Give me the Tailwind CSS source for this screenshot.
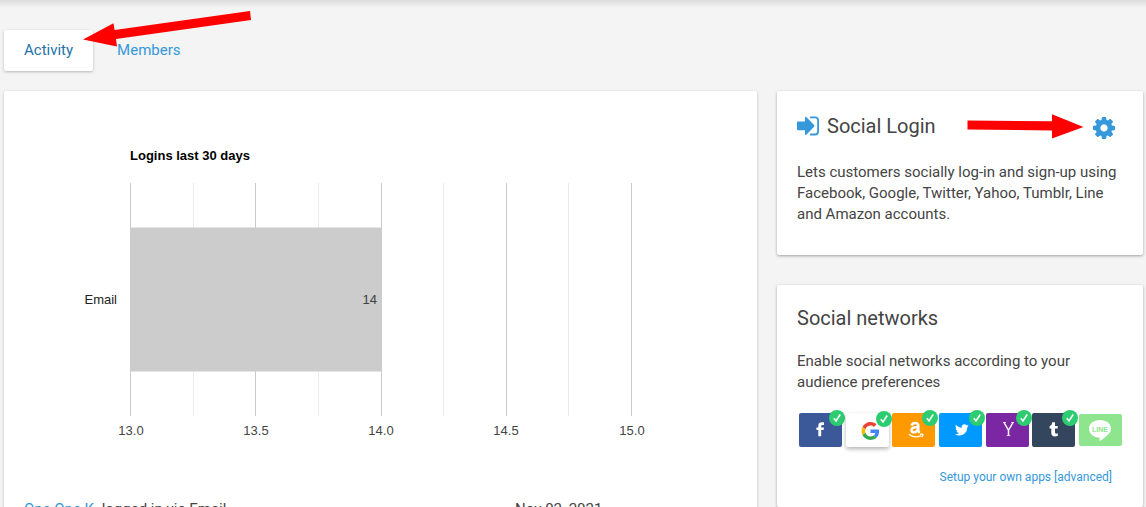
<!DOCTYPE html>
<html lang="en">
<head>
  <meta charset="UTF-8" />
  <meta name="viewport" content="width=device-width, initial-scale=1.0"/>
  <title>Social Login - Activity</title>
  <script src="https://cdn.jsdelivr.net/npm/@tailwindcss/browser@4"></script>
</head>
<body class="bg-[#f4f4f4] text-[#444] font-['Roboto',sans-serif] text-[15px] leading-[21px]">

  <div class="relative h-screen overflow-hidden pl-1 pr-[3px]">
    <!-- Shadow of the top bar -->
    <div class="absolute inset-x-0 top-0 h-2 bg-linear-to-b from-[#dcdcdc] to-[#f4f4f4]"></div>

    <!-- Tabs -->
    <nav class="flex pt-[30px] mb-5">
      <a href="#activity" class="bg-white rounded-xs shadow-[0_1px_3px_rgba(0,0,0,0.25)] px-5 py-[10px] text-[#2472a8]">Activity</a>
      <a href="#members" class="px-6 py-[10px] text-[#3498db]">Members</a>
    </nav>

    <div class="flex gap-5 items-start">
      <!-- Activity -->
      <main id="activity" class="flex-1 min-w-0 bg-white rounded-xs shadow-[0_1px_3px_rgba(0,0,0,0.25)] pb-5">
        <svg class="block h-[408px]" width="713" height="408" viewBox="0 0 713 408" font-family="Liberation Sans, Arial, sans-serif" font-size="13" role="img" aria-label="Logins last 30 days">
          <text x="126" y="69" font-weight="bold" fill="#000">Logins last 30 days</text>
          <g fill="#ebebeb">
            <rect x="189" y="92" width="1" height="233"/>
            <rect x="314" y="92" width="1" height="233"/>
            <rect x="439" y="92" width="1" height="233"/>
            <rect x="564" y="92" width="1" height="233"/>
          </g>
          <g fill="#ccc">
            <rect x="126" y="92" width="1" height="233"/>
            <rect x="251" y="92" width="1" height="233"/>
            <rect x="377" y="92" width="1" height="233"/>
            <rect x="502" y="92" width="1" height="233"/>
            <rect x="627" y="92" width="1" height="233"/>
            <rect x="126" y="136.500" width="252" height="144"/>
          </g>
          <text x="113" y="213" text-anchor="end" fill="#222">Email</text>
          <text x="373" y="213" text-anchor="end" fill="#404040">14</text>
          <g fill="#444" text-anchor="middle">
            <text x="127" y="344">13.0</text>
            <text x="252" y="344">13.5</text>
            <text x="377" y="344">14.0</text>
            <text x="502" y="344">14.5</text>
            <text x="628" y="344">15.0</text>
          </g>
        </svg>
        <div class="grid grid-cols-[491px_1fr] px-5">
          <p><a href="#" class="text-[#3498db]">One One K.</a> logged in via Email</p>
          <p>Nov 02, 2021</p>
        </div>
      </main>

      <!-- Sidebar -->
      <aside class="w-[366px] space-y-[30px]">
        <section class="bg-white rounded-xs shadow-[0_1px_3px_rgba(0,0,0,0.35)] px-5 pt-5 pb-[30px]">
          <div class="flex items-center h-[30px] mb-[21px]">
            <svg class="w-[22px] h-5 mr-2" viewBox="0 0 22 20" fill="#3498db">
              <path d="M0 6.500Q0 5.500 1 5.500H8V1.500Q8.300 .4 9.300 1L17.100 9.100Q17.700 9.900 17.100 10.700L9.300 18.800Q8.300 19.400 8 18.300V14.300H1Q0 14.300 0 13.300Z"/>
              <path d="M13.700 1.300H18Q21.100 1.300 21.100 4.500V15.200Q21.100 18.500 18 18.500H13.700" fill="none" stroke="#3498db" stroke-width="1.800" stroke-linecap="round"/>
            </svg>
            <h2 class="text-xl">Social Login</h2>
            <button type="button" aria-label="Settings" class="ml-auto mr-2 mt-1">
              <svg class="block w-[22px] h-[22px]" viewBox="0 0 1536 1536" fill="#3498db">
                <path d="M1024 768q0-106-75-181t-181-75-181 75-75 181 75 181 181 75 181-75 75-181zm512-109v222q0 12-8 23t-20 13l-185 28q-19 54-39 91 35 50 107 138 10 12 10 25t-9 23q-27 37-99 108t-94 71q-12 0-26-9l-138-108q-44 23-91 38-16 136-29 186-7 28-36 28H657q-14 0-24.500-8.500T621 1506l-28-184q-49-16-90-37l-141 107q-10 9-25 9-14 0-25-11-126-114-165-168-7-10-7-23 0-12 8-23 15-21 51-66.500t54-70.500q-27-50-41-99L29 913q-13-2-21-12.500T0 877V655q0-12 8-23t19-13l186-28q14-46 39-92-40-57-107-138-10-12-10-24 0-10 9-23 26-36 98.500-107.500T337 135q13 0 26 10l138 107q44-23 91-38 16-136 29-186 7-28 36-28h222q14 0 24.500 8.500T915 30l28 184q49 16 90 37l142-107q9-9 24-9 13 0 25 10 129 119 165 170 7 8 7 22 0 12-8 23-15 21-51 66.500t-54 70.500q26 50 41 98l183 28q13 2 21 12.500t8 23.500z"/>
              </svg>
            </button>
          </div>
          <p>Lets customers socially log-in and sign-up using Facebook, Google, Twitter, Yahoo, Tumblr, Line and Amazon accounts.</p>
        </section>

        <section class="bg-white rounded-xs shadow-[0_1px_3px_rgba(0,0,0,0.35)] px-5 pt-[18px] pb-5">
          <h2 class="text-xl leading-[30px] mb-[18px]">Social networks</h2>
          <p class="mb-5">Enable social networks according to your audience preferences</p>

          <div class="flex justify-between items-center h-[34px] w-[323px] ml-0.5 text-white">
            <button type="button" aria-label="Facebook" class="relative w-[43px] h-[34px] rounded-xs bg-[#3b5998]">
              <svg class="block w-full h-full" viewBox="0 0 43 34" fill="#fff"><path d="M19.300 23.300V17.100H17.400V14.600H19.300V12.800Q19.300 9.300 22.600 9.200H25V12H23.500Q22.200 12 22.200 13.200V14.600H25L24.600 17.100H22.200V23.300Z"/></svg>
              <svg class="absolute -top-[3px] -right-[3px] w-4 h-4" viewBox="0 0 16 16"><circle cx="8" cy="8" r="8" fill="#2ecc71"/><path d="M4.800 8.300L7 11L11.200 4.500" fill="none" stroke="#fff" stroke-width="1.600"/></svg>
            </button>
            <button type="button" aria-label="Google" class="relative w-[43px] h-[34px] rounded-xs bg-white shadow-[0_2px_4px_rgba(0,0,0,0.3)]">
              <svg class="block w-full h-full" viewBox="0 0 43 34"><g transform="translate(15.500 9) scale(.375)">
                <path fill="#ea4335" d="M24 9.500c3.540 0 6.710 1.220 9.210 3.600l6.850-6.850C35.900 2.380 30.470 0 24 0 14.620 0 6.510 5.380 2.560 13.220l7.980 6.190C12.430 13.720 17.740 9.500 24 9.500z"/>
                <path fill="#4285f4" d="M46.980 24.550c0-1.570-.15-3.090-.38-4.550H24v9.020h12.940c-.58 2.960-2.260 5.480-4.780 7.180l7.730 6c4.510-4.180 7.090-10.360 7.090-17.650z"/>
                <path fill="#fbbc05" d="M10.530 28.590c-.48-1.450-.76-2.990-.76-4.590s.27-3.140.76-4.590l-7.980-6.190C.92 16.460 0 20.120 0 24s.92 7.540 2.560 10.780z"/>
                <path fill="#34a853" d="M24 48c6.480 0 11.930-2.130 15.890-5.810l-7.730-6c-2.150 1.450-4.920 2.300-8.160 2.300-6.260 0-11.570-4.220-13.470-9.910l-7.980 6.190C6.510 42.620 14.620 48 24 48z"/></g></svg>
              <svg class="absolute -top-[2px] -right-[3px] w-4 h-4" viewBox="0 0 16 16"><circle cx="8" cy="8" r="8" fill="#2ecc71"/><path d="M4.800 8.300L7 11L11.200 4.500" fill="none" stroke="#fff" stroke-width="1.600"/></svg>
            </button>
            <button type="button" aria-label="Amazon" class="relative w-[43px] h-[34px] rounded-xs bg-[#ff9900]">
              <svg class="block w-full h-full" viewBox="0 0 43 34" fill="none" stroke="#fff"><path d="M19.600 12.600Q20.200 9.900 23.200 10Q26.300 10.100 26.300 13V17Q26.300 18.700 27.700 19.800M26.300 13.900Q19.600 13.600 19.500 17.100Q19.600 19.400 22 19.300Q25.200 19.100 26 16" stroke-width="2.500"/><path d="M16.800 21.300Q22.500 25.800 29 22.600M28 21.300Q31.300 20.500 30.900 21.800Q30.600 23 29.600 24" stroke-width="1.300"/></svg>
              <svg class="absolute -top-[3px] -right-[3px] w-4 h-4" viewBox="0 0 16 16"><circle cx="8" cy="8" r="8" fill="#2ecc71"/><path d="M4.800 8.300L7 11L11.200 4.500" fill="none" stroke="#fff" stroke-width="1.600"/></svg>
            </button>
            <button type="button" aria-label="Twitter" class="relative w-[43px] h-[34px] rounded-xs bg-[#0099ff]">
              <svg class="block w-full h-full" viewBox="0 0 43 34" fill="#fff"><path transform="translate(16 10) scale(.57)" d="M23.950 4.570a10 10 0 01-2.820.77 4.960 4.960 0 002.160-2.720c-.95.550-2 .95-3.130 1.180a4.920 4.920 0 00-8.380 4.480C7.690 8.100 4.070 6.130 1.640 3.160a4.820 4.820 0 00-.67 2.480c0 1.710.87 3.210 2.190 4.100a4.900 4.900 0 01-2.230-.62v.06a4.920 4.920 0 003.950 4.830 5 5 0 01-2.210.08 4.940 4.940 0 004.600 3.420A9.870 9.870 0 010 19.540a13.990 13.990 0 007.560 2.210c9.050 0 13.990-7.500 13.990-13.980 0-.21 0-.42-.02-.63a9.940 9.940 0 002.460-2.550z"/></svg>
              <svg class="absolute -top-[3px] -right-[3px] w-4 h-4" viewBox="0 0 16 16"><circle cx="8" cy="8" r="8" fill="#2ecc71"/><path d="M4.800 8.300L7 11L11.200 4.500" fill="none" stroke="#fff" stroke-width="1.600"/></svg>
            </button>
            <button type="button" aria-label="Yahoo" class="relative w-[43px] h-[34px] rounded-xs bg-[#7b26a3]">
              <svg class="block w-full h-full" viewBox="0 0 43 34" fill="none" stroke="#fff"><path d="M18 9.500L22.500 17.300L27 9.500M22.500 17V22.500" stroke-width="1.500"/><path d="M17 9.500H20M25.300 9.500H28M20.700 22.600H24.300" stroke-width=".8"/></svg>
              <svg class="absolute -top-[3px] -right-[3px] w-4 h-4" viewBox="0 0 16 16"><circle cx="8" cy="8" r="8" fill="#2ecc71"/><path d="M4.800 8.300L7 11L11.200 4.500" fill="none" stroke="#fff" stroke-width="1.600"/></svg>
            </button>
            <button type="button" aria-label="Tumblr" class="relative w-[43px] h-[34px] rounded-xs bg-[#34465d]">
              <svg class="block w-full h-full" viewBox="0 0 43 34" fill="#fff"><path d="M20.300 9.200H23V13H25.700V15.600H23V19.300Q23.100 21 24.500 20.700L25.800 20.300V22.800Q24.500 23.500 23 23.500Q19.400 23.300 19.300 20V15.600H17.600V13.300Q20 12.500 20.300 9.200Z"/></svg>
              <svg class="absolute -top-[3px] -right-[3px] w-4 h-4" viewBox="0 0 16 16"><circle cx="8" cy="8" r="8" fill="#2ecc71"/><path d="M4.800 8.300L7 11L11.200 4.500" fill="none" stroke="#fff" stroke-width="1.600"/></svg>
            </button>
            <button type="button" aria-label="Line" class="w-[43px] h-8 rounded-xs bg-[#8ee58e]">
              <svg class="block w-full h-full" viewBox="0 0 43 32"><path fill="#fff" d="M21 6C27.500 6 32 9.800 32 14.800C32 18.500 29 21.500 21.800 26.500Q20.300 27.400 20.500 25.800L20.700 23.800C14.500 23.500 10 19.800 10 14.800C10 9.800 14.500 6 21 6Z"/><text x="21" y="18" text-anchor="middle" font-family="Liberation Sans, Arial, sans-serif" font-size="7" font-weight="bold" fill="#8ee58e">LINE</text></svg>
            </button>
          </div>

          <p class="mt-5 pr-[11px] text-right text-xs leading-5"><a href="#apps" class="text-[#3498db]">Setup your own apps [advanced]</a></p>
        </section>
      </aside>
    </div>

    <!-- Pointer arrows -->
    <svg class="absolute left-[82px] top-[10px] w-[170px] h-[38px] pointer-events-none" viewBox="0 0 170 38" fill="#f00">
      <path d="M1 29.500L31.500 13.300L32.600 20L168 1L169 10L34 29L35 36.500Z"/>
    </svg>
    <svg class="absolute right-[62px] top-[113px] w-[117px] h-[27px] pointer-events-none" viewBox="0 0 117 27" fill="#f00">
      <path d="M.5 7.500L85 8.300L85 1.300L116.500 14L85 25.500V17.500L.5 16.500Z"/>
    </svg>
  </div>

</body>
</html>
